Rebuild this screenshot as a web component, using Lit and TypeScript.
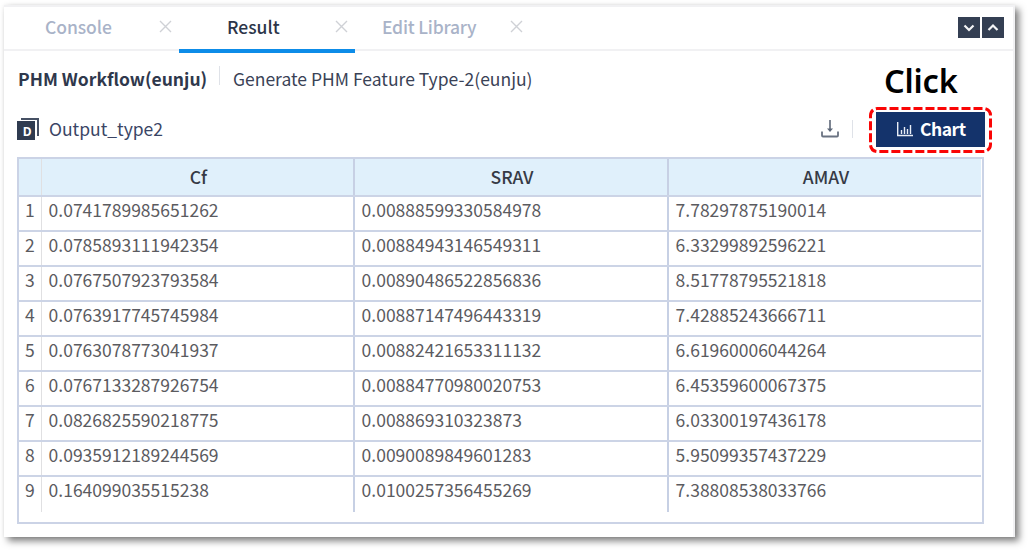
import { LitElement, html, css, svg } from "lit";
import { customElement } from "lit/decorators.js";

const ROWS: string[][] = [
  ["0.0741789985651262", "0.00888599330584978", "7.78297875190014"],
  ["0.0785893111942354", "0.00884943146549311", "6.33299892596221"],
  ["0.0767507923793584", "0.00890486522856836", "8.51778795521818"],
  ["0.0763917745745984", "0.00887147496443319", "7.42885243666711"],
  ["0.0763078773041937", "0.00882421653311132", "6.61960006044264"],
  ["0.0767133287926754", "0.00884770980020753", "6.45359600067375"],
  ["0.0826825590218775", "0.008869310323873", "6.03300197436178"],
  ["0.0935912189244569", "0.0090089849601283", "5.95099357437229"],
  ["0.164099035515238", "0.0100257356455269", "7.38808538033766"],
];

const closeIcon = html`<svg class="close" width="13" height="13" viewBox="0 0 13 13">
  <path d="M1 1L12 12M12 1L1 12" stroke="#cfd1d6" stroke-width="1.4" fill="none" />
</svg>`;

const chevron = (d: string) => html`<span class="sq"><svg width="22" height="21" viewBox="0 0 22 21">
  ${svg`<path d=${d} fill="none" stroke="#f4f5f7" stroke-width="2.2"/>`}
</svg></span>`;

@customElement("app-root")
export class AppRoot extends LitElement {
  static styles = css`
    :host {
      display: block;
      box-sizing: border-box;
      width: 1028px;
      height: 550px;
      padding: 5px 0 0 4px;
      overflow: hidden;
      background: #fff;
      color: #3a4256;
      font: 400 17.5px/26px "Noto Sans CJK KR", "Open Sans", sans-serif;
      white-space: nowrap;
    }
    * { box-sizing: border-box; }
    svg { display: block; flex: none; }
    .panel {
      position: relative;
      width: 1011px;
      height: 532px;
      background: #fff;
      border-top: 2px solid #f1f1f3;
      border-right: 2px solid #f1f1f3;
      box-shadow: 4px 4px 7px rgba(0, 0, 0, 0.5), 0 0 4px rgba(0, 0, 0, 0.06);
    }
    .tabs {
      display: flex;
      height: 44px;
      border-bottom: 2px solid #f1f1f3;
      font-weight: 500;
    }
    .tab {
      display: flex;
      align-items: center;
      justify-content: space-between;
      width: 175px;
      height: 46px;
      padding: 0 7px 7px 41px;
      color: #a9b3c8;
      letter-spacing: -0.08px;
    }
    .tab.active {
      width: 176px;
      padding: 0 7px 3px 48px;
      border-bottom: 4px solid #0d8ce8;
      color: #2c3549;
      letter-spacing: 0;
    }
    .tab.last { width: 175px; padding-left: 27px; letter-spacing: -0.2px; }
    .tools { display: flex; gap: 2px; margin: 10px 9px 0 auto; }
    .sq { width: 22px; height: 21px; background: #343f53; }
    .crumbs { display: flex; align-items: center; height: 56px; padding-left: 14px; }
    .crumbs b { width: 201px; color: #2f384c; }
    .bar { width: 1px; height: 19px; background: #dfe2e8; }
    .crumbs .bar { margin: -7px 13px 0 0; }
    .output { display: flex; align-items: center; height: 44px; padding-left: 13px; }
    .name { margin: -1px 0 0 10px; color: #3a4565; }
    .download { margin-left: auto; }
    .output .bar { margin: 0 23px 0 13px; height: 18px; }
    .chart {
      display: flex;
      align-items: center;
      gap: 7px;
      width: 109px;
      height: 35px;
      margin-right: 28px;
      padding-left: 21px;
      background: #14336b;
      color: #fff;
      font-weight: 700;
      letter-spacing: -0.5px;
    }
    .table {
      width: 967px;
      height: 367px;
      margin: 6px 0 0 13px;
      border: 2px solid #cbd3e6;
      padding-right: 1px;
    }
    .row {
      display: grid;
      grid-template-columns: 23px 313px 314px 1fr;
      height: 35px;
      border-bottom: 2px solid #ccd4e6;
      color: #5b5b5f;
    }
    .row:last-child { border-bottom: 0; }
    .row.head { height: 38px; background: #e0f0fb; color: #363a45; font-weight: 500; }
    .cell { padding: 0 0 0 6.6px; border-right: 2px solid #c7d0e4; }
    .cell:first-child { padding-left: 6px; border-right: 1px solid #e0e0e2; }
    .cell:last-child { border-right: 0; }
    .head .cell { padding: 5px 0 0 2px; text-align: center; }
    .callout {
      position: absolute;
      left: 880px;
      top: 52px;
      color: #000;
      font: 600 32.5px/43px "Noto Sans", sans-serif;
      letter-spacing: -0.2px;
    }
    .dash { position: absolute; left: 864px; top: 99px; }
  `;

  render() {
    return html`<div class="panel">
      <div class="tabs">
        <div class="tab"><span>Console</span>${closeIcon}</div>
        <div class="tab active"><span>Result</span>${closeIcon}</div>
        <div class="tab last"><span>Edit Library</span>${closeIcon}</div>
        <div class="tools">${chevron("M6.5 8.5L11 13L15.5 8.5")}${chevron("M6.5 13L11 8.5L15.5 13")}</div>
      </div>
      <div class="crumbs"><b>PHM Workflow(eunju)</b><i class="bar"></i><span>Generate PHM Feature Type-2(eunju)</span></div>
      <div class="output">
        <svg width="22" height="22" viewBox="0 0 22 22">
          <path d="M4 1H21V18" fill="none" stroke="#465064" stroke-width="2" />
          <rect y="3" width="18" height="19" fill="#2f3b50" />
          <text x="10.2" y="18" text-anchor="middle" font-size="12" font-weight="700" font-family="Open Sans" fill="#fff">D</text>
        </svg>
        <span class="name">Output_type2</span>
        <svg class="download" width="18" height="18" viewBox="0 0 18 18">
          <path d="M1 11.5V15.5Q1 16.5 2 16.5H16Q17 16.5 17 15.5V11.5" fill="none" stroke="#6a7382" stroke-width="1.8" />
          <path d="M9 0V10" fill="none" stroke="#5c6677" stroke-width="1.6" />
          <path d="M6 8.5H12L9 12Z" fill="#5c6677" />
        </svg>
        <i class="bar"></i>
        <div class="chart">
          <svg width="16" height="15" viewBox="0 0 16 15">
            <path d="M.7 0V13.5H16M4.5 12V8M7.5 12V5M10.5 12V7M13.5 12V3" fill="none" stroke="#e8edf6" stroke-width="1.4" />
          </svg>
          <span>Chart</span>
        </div>
      </div>
      <div class="table">
        <div class="row head"><div class="cell"></div>${["Cf", "SRAV", "AMAV"].map((t) => html`<div class="cell">${t}</div>`)}</div>
        ${ROWS.map((r, i) => html`<div class="row"><div class="cell">${i + 1}</div>${r.map((v) => html`<div class="cell">${v}</div>`)}</div>`)}
      </div>
      <div class="callout">Click</div>
      <svg class="dash" width="125" height="49" viewBox="0 0 125 49">
        <rect x="2.5" y="2.5" width="120" height="43" rx="7" fill="none" stroke="#fa0505" stroke-width="3" stroke-dasharray="9 3" />
      </svg>
    </div>`;
  }
}
